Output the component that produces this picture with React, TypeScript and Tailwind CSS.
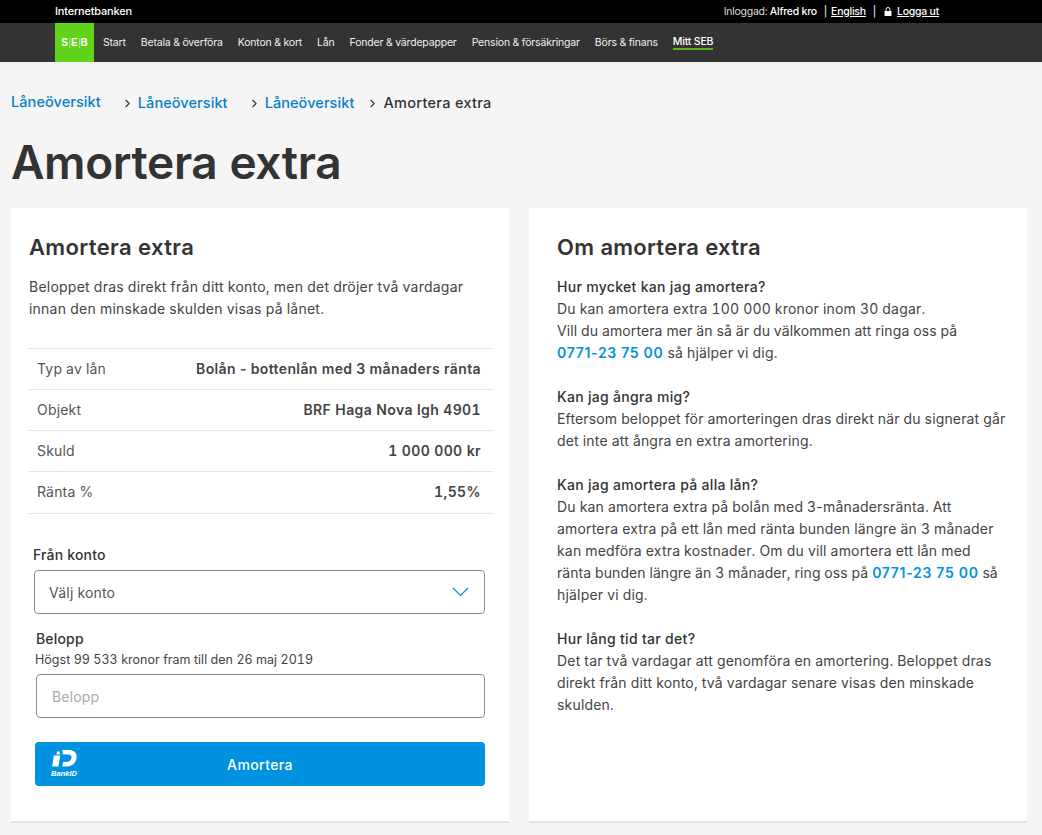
import { ChevronRight } from "lucide-react";

const navItems = ["Start", "Betala & överföra", "Konton & kort", "Lån", "Fonder & värdepapper", "Pension & försäkringar", "Börs & finans"];

const rows = [
  { label: "Typ av lån", value: "Bolån - bottenlån med 3 månaders ränta", nums: "[font-variant-numeric:normal]" },
  { label: "Objekt", value: "BRF Haga Nova lgh 4901", nums: "" },
  { label: "Skuld", value: "1 000 000 kr", nums: "" },
  { label: "Ränta %", value: "1,55%", nums: "" },
];

function Crumb({ text }: { text: string }) {
  return <a className="text-[#0a7fc9] font-medium">{text}</a>;
}

function Phone() {
  return <a className="font-semibold text-[#0092e1] tracking-[0.7px] [font-variant-numeric:normal]">0771-23 75 00</a>;
}

function BankIdLogo() {
  return (
    <div className="flex flex-col items-center w-[26px] text-white">
      <svg width="25" height="17" viewBox="0 0 25 17" fill="currentColor">
        <path d="M1.800 5.500h6.400L6.500 16.500H0.200z" />
        <path d="M5 1.500h3L7.500 4.500H4.500z" />
        <path d="M10 0h6.500c5.600 0 8.700 2.900 8 8-.7 5.300-4.500 8.500-10.200 8.500h-4l.9-4.500h3.300c2.700 0 4.600-1.500 5-3.900.4-2.300-.9-3.600-3.400-3.600h-2.800c-1.400 0-2.700-.3-3.400-1.300l.8 1.200-.2-4.400z" />
      </svg>
      <span className="mt-[3px] text-[7.5px] leading-[8px] font-bold italic tracking-[0px] font-['Liberation_Sans',sans-serif]">BankID</span>
    </div>
  );
}

export default function App() {
  return (
    <div className="h-[835px] overflow-hidden bg-[#f5f5f5] text-[#333] font-['Inter',sans-serif] text-[14px] tracking-[0.18px] [font-variant-numeric:tabular-nums]">
      {/* Top bar */}
      <div className="h-[23px] bg-black text-white text-[10.5px] flex items-center justify-between pl-[55px] pr-[103px] font-medium tracking-[-0.25px]">
        <span className="text-[11px] tracking-[-0.2px]">Internetbanken</span>
        <div className="flex items-center">
          <span className="font-normal text-[#ddd] tracking-[-0.25px]">Inloggad:&nbsp;</span>
          <span>Alfred kro</span>
          <span className="ml-[7px] mr-[4px] font-normal">|</span>
          <a className="underline">English</a>
          <span className="ml-[7px] mr-[8px] font-normal">|</span>
          <svg width="8" height="9" viewBox="0 0 8 9" fill="white" className="mr-[5px]">
            <path d="M0.500 4h7v5h-7z" />
            <path d="M2 4V2.500a2 2 0 0 1 4 0V4" fill="none" stroke="white" strokeWidth="1" />
          </svg>
          <a className="underline">Logga ut</a>
        </div>
      </div>

      {/* Main nav */}
      <div className="h-[39px] bg-[#333] flex items-center pl-[55px] text-[10.5px] text-[#eee] tracking-[-0.18px]">
        <div className="w-[39px] h-full bg-[#60d31a] flex items-center justify-center text-white font-bold text-[10px] leading-[10px] tracking-[0px] mr-[9px] font-['Liberation_Sans',sans-serif]">
          <span className="px-[1px]">S</span>
          <span className="px-[1px] border-x border-white/40">E</span>
          <span className="px-[1px]">B</span>
        </div>
        <div className="flex items-center gap-[15px]">
          {navItems.map((n) => (
            <a key={n}>{n}</a>
          ))}
          <a className="border-b-2 border-[#60b51f] text-white font-medium leading-[13px]">Mitt SEB</a>
        </div>
      </div>

      {/* Breadcrumb */}
      <div className="flex items-center h-[14px] mt-[34px] pl-[11px] font-medium text-[14.5px] tracking-[0.08px]">
        <span className="-mt-[2px]"><Crumb text="Låneöversikt" /></span>
        <ChevronRight size={13} strokeWidth={2} className="ml-[20px] mr-[4px] text-[#333]" />
        <Crumb text="Låneöversikt" />
        <ChevronRight size={13} strokeWidth={2} className="ml-[20px] mr-[4px] text-[#333]" />
        <Crumb text="Låneöversikt" />
        <ChevronRight size={13} strokeWidth={2} className="ml-[12px] mr-[4px] text-[#333]" />
        <span className="text-[#333] tracking-[0.3px]">Amortera extra</span>
      </div>

      <h1 className="pl-[11px] mt-[24px] text-[46px] leading-[56px] font-semibold text-[#333] tracking-[-0.35px]">Amortera extra</h1>

      {/* Cards */}
      <div className="flex gap-[20px] mt-[18px] pl-[11px] pr-[15px]">
        <section className="w-[498px] h-[615px] bg-white border-b-2 border-[#e2e2e2] pt-[27px] px-[18px]">
          <h2 className="text-[22px] leading-[24px] font-semibold tracking-[0.35px]">Amortera extra</h2>
          <p className="mt-[17px] leading-[22px] text-[#444] tracking-[0.23px]">
            Beloppet dras direkt från ditt konto, men det dröjer två vardagar
            <br />
            innan den minskade skulden visas på lånet.
          </p>
          <div className="mt-[28px] border-t border-[#e3e3e3] w-[465px] -ml-[1px]">
            {rows.map((r, i) => (
              <div key={r.label} className={`border-b border-[#e3e3e3] flex items-center justify-between pb-[2px] pl-[9px] pr-[12px] ${i === 3 ? "h-[42px]" : "h-[41px]"}`}>
                <span className="text-[#555]">{r.label}</span>
                <span className={`font-semibold text-[#444] tracking-[0.38px] ${r.nums}`}>{r.value}</span>
              </div>
            ))}
          </div>

          <label className="block mt-[33px] ml-[4px] font-medium leading-[16px]">Från konto</label>
          <div className="mt-[7px] ml-[5px] h-[44px] w-[451px] border border-[#8f8f8f] rounded-[4px] flex items-center justify-between pl-[14px] pr-[15px] text-[#555]">
            <span>Välj konto</span>
            <svg width="17" height="10" viewBox="0 0 17 10" fill="none" stroke="#0a8fe0" strokeWidth="1.2">
              <path d="M1 1l7.500 7.500L16 1" />
            </svg>
          </div>

          <label className="block mt-[17px] ml-[7px] font-medium leading-[16px]">Belopp</label>
          <p className="ml-[6px] mt-[5px] text-[12.5px] leading-[16px] text-[#444] tracking-[0.03px]">Högst 99 533 kronor fram till den 26 maj 2019</p>
          <div className="mt-[6px] ml-[7px] h-[44px] w-[449px] border border-[#8f8f8f] rounded-[4px] flex items-center pl-[15px] text-[#aaa]">Belopp</div>

          <button className="mt-[24px] ml-[6px] h-[44px] w-[450px] bg-[#0092e1] rounded-[4px] flex items-center pl-[16px] text-white font-medium tracking-[0.4px]">
            <BankIdLogo />
            <span className="flex-1 pr-[42px] text-center">Amortera</span>
          </button>
        </section>

        <section className="w-[498px] h-[615px] bg-white border-b-2 border-[#e2e2e2] pt-[27px] pl-[28px] pr-[18px] leading-[22px] text-[#444]">
          <h2 className="text-[22px] leading-[24px] font-semibold text-[#333] tracking-[0.25px]">Om amortera extra</h2>
          <div className="mt-[17px]">
            <h3 className="font-medium text-[#333] tracking-[0.3px]">Hur mycket kan jag amortera?</h3>
            <p>
              Du kan amortera extra 100 000 kronor inom 30 dagar.
              <br />
              <span className="tracking-[0.1px]">Vill du amortera mer än så är du välkommen att ringa oss på</span>
              <br />
              <Phone /> så hjälper vi dig.
            </p>
          </div>
          <div className="mt-[22px]">
            <h3 className="font-medium text-[#333] tracking-[0.3px]">Kan jag ångra mig?</h3>
            <p>
              <span className="tracking-[0.15px]">Eftersom beloppet för amorteringen dras direkt när du signerat går</span>
              <br />
              det inte att ångra en extra amortering.
            </p>
          </div>
          <div className="mt-[22px]">
            <h3 className="font-medium text-[#333] tracking-[0.3px]">Kan jag amortera på alla lån?</h3>
            <p>
              Du kan amortera extra på bolån med 3<span className="[font-variant-numeric:normal]">-</span>månadersränta. Att
              <br />
              amortera extra på ett lån med ränta bunden längre än 3 månader
              <br />
              kan medföra extra kostnader. Om du vill amortera ett lån med
              <br />
              <span className="whitespace-nowrap tracking-[0.07px]">ränta bunden längre än 3 månader, ring oss på <Phone /> så</span>
              <br />
              hjälper vi dig.
            </p>
          </div>
          <div className="mt-[22px]">
            <h3 className="font-medium text-[#333] tracking-[0.3px]">Hur lång tid tar det?</h3>
            <p>
              Det tar två vardagar att genomföra en amortering. Beloppet dras
              <br />
              direkt från ditt konto, två vardagar senare visas den minskade
              <br />
              skulden.
            </p>
          </div>
        </section>
      </div>
    </div>
  );
}
